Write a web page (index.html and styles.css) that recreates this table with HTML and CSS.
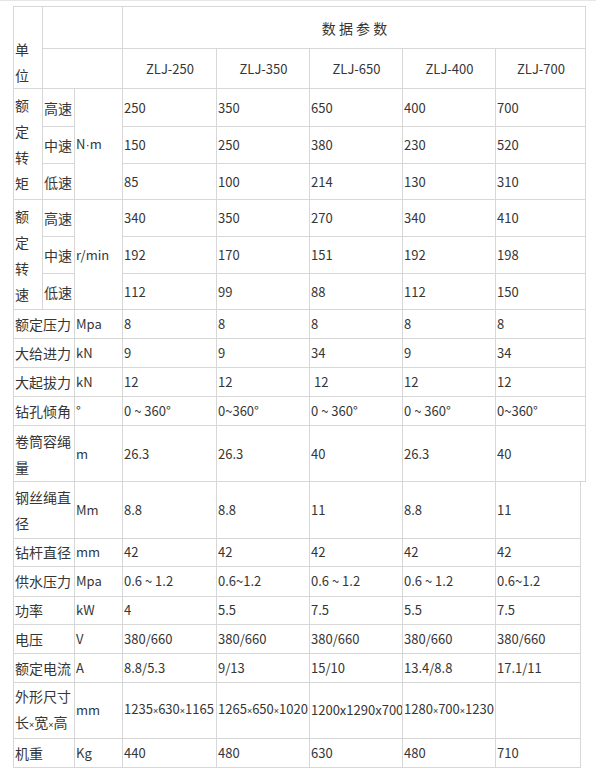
FILE: index.html
```html
<!DOCTYPE html>
<html lang="zh-CN">
<head>
<meta charset="utf-8">
<title>数据参数</title>
<link rel="stylesheet" href="styles.css">
</head>
<body>
<div class="topline"></div>
<div class="wrap">
<table class="spec first-table">
<colgroup>
<col class="c0"><col class="c1"><col class="c2"><col class="cm3"><col class="cm"><col class="cm"><col class="cm"><col class="c7a">
</colgroup>
<tr class="h42">
<td rowspan="2" class="lab unit">单<br>位</td>
<td colspan="2"></td>
<td colspan="5" class="lab center">数 据 参 数</td>
</tr>
<tr class="h40">
<td colspan="2"></td>
<td class="center">ZLJ-250</td>
<td class="center">ZLJ-350</td>
<td class="center">ZLJ-650</td>
<td class="center">ZLJ-400</td>
<td class="center">ZLJ-700</td>
</tr>
<tr class="h38">
<td rowspan="3" class="lab">额<br>定<br>转<br>矩</td>
<td class="lab">高速</td>
<td rowspan="3">N<span class="dot">·</span>m</td>
<td>250</td><td>350</td><td>650</td><td>400</td><td>700</td>
</tr>
<tr class="h37">
<td class="lab">中速</td>
<td>150</td><td>250</td><td>380</td><td>230</td><td>520</td>
</tr>
<tr class="h36">
<td class="lab">低速</td>
<td>85</td><td>100</td><td>214</td><td>130</td><td>310</td>
</tr>
<tr class="h37">
<td rowspan="3" class="lab">额<br>定<br>转<br>速</td>
<td class="lab">高速</td>
<td rowspan="3">r/min</td>
<td>340</td><td>350</td><td>270</td><td>340</td><td>410</td>
</tr>
<tr class="h37">
<td class="lab">中速</td>
<td>192</td><td>170</td><td>151</td><td>192</td><td>198</td>
</tr>
<tr class="h36">
<td class="lab">低速</td>
<td>112</td><td>99</td><td>88</td><td>112</td><td>150</td>
</tr>
<tr class="h29">
<td colspan="2" class="lab">额定压力</td><td>Mpa</td>
<td>8</td><td>8</td><td>8</td><td>8</td><td>8</td>
</tr>
<tr class="h29">
<td colspan="2" class="lab">大给进力</td><td>kN</td>
<td>9</td><td>9</td><td>34</td><td>9</td><td>34</td>
</tr>
<tr class="h29">
<td colspan="2" class="lab">大起拔力</td><td>kN</td>
<td>12</td><td>12</td><td>&nbsp;12</td><td>12</td><td>12</td>
</tr>
<tr class="h29">
<td colspan="2" class="lab">钻孔倾角</td><td>°</td>
<td>0 ~ 360°</td><td>0~360°</td><td>0 ~ 360°</td><td>0 ~ 360°</td><td>0~360°</td>
</tr>
<tr class="h56">
<td colspan="2" class="lab">卷筒容绳<br>量</td><td>m</td>
<td>26.3</td><td>26.3</td><td>40</td><td>26.3</td><td>40</td>
</tr>
</table>
<table class="spec second-table">
<colgroup>
<col class="c0"><col class="c1"><col class="c2"><col class="cm3"><col class="cm"><col class="cm"><col class="cm"><col class="c7b">
</colgroup>
<tr class="h56 first">
<td colspan="2" class="lab">钢丝绳直<br>径</td><td>Mm</td>
<td>8.8</td><td>8.8</td><td>11</td><td>8.8</td><td>11</td>
</tr>
<tr class="h28">
<td colspan="2" class="lab">钻杆直径</td><td>mm</td>
<td>42</td><td>42</td><td>42</td><td>42</td><td>42</td>
</tr>
<tr class="h30">
<td colspan="2" class="lab">供水压力</td><td>Mpa</td>
<td>0.6 ~ 1.2</td><td>0.6~1.2</td><td>0.6 ~ 1.2</td><td>0.6 ~ 1.2</td><td>0.6~1.2</td>
</tr>
<tr class="h28">
<td colspan="2" class="lab">功率</td><td>kW</td>
<td>4</td><td>5.5</td><td>7.5</td><td>5.5</td><td>7.5</td>
</tr>
<tr class="h29">
<td colspan="2" class="lab">电压</td><td>V</td>
<td>380/660</td><td>380/660</td><td>380/660</td><td>380/660</td><td>380/660</td>
</tr>
<tr class="h29">
<td colspan="2" class="lab">额定电流</td><td>A</td>
<td>8.8/5.3</td><td>9/13</td><td>15/10</td><td>13.4/8.8</td><td>17.1/11</td>
</tr>
<tr class="h56">
<td colspan="2" class="lab">外形尺寸<br>长<span class="mul">×</span>宽<span class="mul">×</span>高</td><td>mm</td>
<td>1235<span class="mul">×</span>630<span class="mul">×</span>1165</td>
<td>1265<span class="mul">×</span>650<span class="mul">×</span>1020</td>
<td>1200x1290x700</td>
<td>1280<span class="mul">×</span>700<span class="mul">×</span>1230</td>
<td></td>
</tr>
<tr class="h29">
<td colspan="2" class="lab">机重</td><td>Kg</td>
<td>440</td><td>480</td><td>630</td><td>480</td><td>710</td>
</tr>
</table>
</div>
</body>
</html>
```
FILE: styles.css
```css
html, body {
  margin: 0;
  padding: 0;
  background: #ffffff;
}
body {
  width: 596px;
  font-family: "Noto Sans CJK SC", "Noto Sans", sans-serif;
  font-size: 13px;
  color: #363636;
}
.topline {
  height: 1px;
  background: #e6e6e6;
}
.wrap {
  padding: 5px 0 0 13px;
}
.spec {
  border-collapse: collapse;
  table-layout: fixed;
  border-spacing: 0;
}
.first-table {
  width: 572px;
}
.second-table {
  width: 567px;
}
.spec td {
  border: 1px solid #d7d7d7;
  padding: 0 0 0 1px;
  font-size: 13px;
  line-height: 26px;
  vertical-align: middle;
  white-space: nowrap;
  overflow: hidden;
}
.spec td.lab {
  font-size: 14px;
}
.dot {
  font-family: "Liberation Sans", "DejaVu Sans", sans-serif;
}
.mul {
  font-family: "Liberation Sans", "DejaVu Sans", sans-serif;
  font-size: 9px;
}
.spec .center {
  text-align: center;
}
.spec .unit {
  vertical-align: bottom;
}
.second-table tr.first td {
  border-top: 0;
}
.c0 { width: 29px; }
.c1 { width: 32px; }
.c2 { width: 48px; }
.cm3 { width: 94px; }
.cm { width: 93px; }
.c7a { width: 90px; }
.c7b { width: 85px; }
.h42 { height: 42px; }
.h40 { height: 40px; }
.h38 { height: 38px; }
.h37 { height: 37px; }
.h36 { height: 36px; }
.h30 { height: 30px; }
.h29 { height: 29px; }
.h28 { height: 28px; }
.h56 { height: 56px; }
```
